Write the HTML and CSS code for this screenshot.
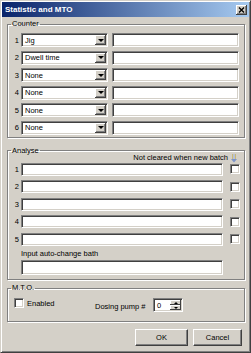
FILE: index.html
```html
<!DOCTYPE html>
<html>

<head>
    <title>Statistic and MTO</title>
    <link rel="stylesheet" href="styles.css">
</head>

<body>
    <div class="window">
        <div class="titlebar">
            <span class="title">Statistic and MTO</span>
            <span class="close">
                <svg width="7" height="6" viewBox="0 0 7 6">
                    <path d="M1 0.5 L6 5.5 M6 0.5 L1 5.5" stroke="#000" stroke-width="1.4" fill="none" />
                </svg>
            </span>
        </div>

        <div class="client">
            <!-- カウンター -->
            <fieldset class="group counter">
                <legend>Counter</legend>
                <div class="row"><span class="num">1</span><div class="combo"><span class="value">Jig</span><span class="drop"><i></i></span></div><div class="field wide"></div></div>
                <div class="row"><span class="num">2</span><div class="combo"><span class="value">Dwell time</span><span class="drop"><i></i></span></div><div class="field wide"></div></div>
                <div class="row"><span class="num">3</span><div class="combo"><span class="value">None</span><span class="drop"><i></i></span></div><div class="field wide"></div></div>
                <div class="row"><span class="num">4</span><div class="combo"><span class="value">None</span><span class="drop"><i></i></span></div><div class="field wide"></div></div>
                <div class="row"><span class="num">5</span><div class="combo"><span class="value">None</span><span class="drop"><i></i></span></div><div class="field wide"></div></div>
                <div class="row"><span class="num">6</span><div class="combo"><span class="value">None</span><span class="drop"><i></i></span></div><div class="field wide"></div></div>
            </fieldset>

            <!-- 分析 -->
            <fieldset class="group analyse">
                <legend>Analyse</legend>
                <div class="note">
                    <span>Not cleared when new batch</span>
                    <svg class="pin" width="6" height="9" viewBox="0 0 6 9">
                        <path d="M1.5 0 V5 M4.5 0 V5" stroke="#c8b878" stroke-width="1" />
                        <path d="M0 5 H6 L3 8.5 Z" fill="#7d94c8" />
                        <path d="M3 0 V5" stroke="#9fb3dd" stroke-width="1" />
                    </svg>
                </div>
                <div class="arow"><span class="num">1</span><div class="field long"></div><span class="check"></span></div>
                <div class="arow"><span class="num">2</span><div class="field long"></div><span class="check"></span></div>
                <div class="arow"><span class="num">3</span><div class="field long"></div><span class="check"></span></div>
                <div class="arow"><span class="num">4</span><div class="field long"></div><span class="check"></span></div>
                <div class="arow"><span class="num">5</span><div class="field long"></div><span class="check"></span></div>
                <div class="bath-label">Input auto-change bath</div>
                <div class="field bath"></div>
            </fieldset>

            <!-- MTO -->
            <fieldset class="group mto">
                <legend>M.T.O.</legend>
                <div class="mto-row">
                    <label class="enabled"><span class="check"></span><span>Enabled</span></label>
                    <div class="dosing">
                        <span class="dosing-label">Dosing pump #</span>
                        <div class="spin">
                            <span class="spin-value">0</span>
                            <span class="spin-buttons">
                                <span class="spin-btn"><i class="up"></i></span>
                                <span class="spin-btn"><i class="down"></i></span>
                            </span>
                        </div>
                    </div>
                </div>
            </fieldset>

            <div class="buttons">
                <button class="btn ok">OK</button>
                <button class="btn cancel">Cancel</button>
            </div>
        </div>
    </div>
</body>

</html>
```

FILE: styles.css
```css
* {
    box-sizing: border-box;
}

body {
    margin: 0;
    font-family: 'Liberation Sans', Arial, sans-serif;
    font-size: 7.5px;
    color: #000000;
    background: #d4d0c8;
}

.window {
    width: 251px;
    height: 353px;
    background: #d4d0c8;
    border: 1px solid;
    border-color: #d4d0c8 #404040 #404040 #d4d0c8;
    box-shadow: inset 1px 1px #ffffff, inset -1px -1px #808080;
    padding: 1px;
}

.titlebar {
    height: 15px;
    display: flex;
    align-items: center;
    justify-content: space-between;
    padding: 0 2px 0 3px;
    background: linear-gradient(to right, #0a246a, #a6caf0);
}

.title {
    color: #ffffff;
    font-weight: bold;
    font-size: 8px;
}

.close {
    width: 11px;
    height: 10px;
    display: flex;
    align-items: center;
    justify-content: center;
    background: #d4d0c8;
    box-shadow: inset -1px -1px #404040, inset 1px 1px #ffffff, inset -2px -2px #808080;
}

.client {
    padding: 3px 4px 0 5px;
}

.group {
    margin: 0;
    min-width: 0;
    border: 1px solid #808080;
    box-shadow: 1px 1px 0 #ffffff, inset 1px 1px 0 #ffffff;
}

legend {
    line-height: 8px;
    padding: 0 1px;
    margin-left: -1px;
}

.counter {
    padding: 5px 5px 2px 4px;
}

.row {
    display: flex;
    align-items: center;
    height: 14px;
    margin-bottom: 3.6px;
}

.row:last-child {
    margin-bottom: 0;
}

.num {
    width: 7px;
    margin-right: 2px;
    text-align: right;
}

.combo,
.field,
.check,
.spin {
    background: #ffffff;
    border: 1px solid;
    border-color: #808080 #ffffff #ffffff #808080;
    box-shadow: inset 1px 1px #404040, inset -1px -1px #d4d0c8;
}

.combo {
    width: 87px;
    height: 14px;
    display: flex;
    align-items: center;
    padding: 1px;
}

.combo .value {
    flex: 1;
    padding-left: 2px;
}

.drop {
    width: 11px;
    height: 10px;
    display: flex;
    align-items: center;
    justify-content: center;
    background: #d4d0c8;
    box-shadow: inset -1px -1px #404040, inset 1px 1px #ffffff, inset -2px -2px #808080;
}

.drop i {
    width: 0;
    height: 0;
    border-left: 3px solid transparent;
    border-right: 3px solid transparent;
    border-top: 3px solid #000000;
}

.field.wide {
    width: 127px;
    height: 14px;
    margin-left: 4px;
}

.analyse {
    margin-top: 9px;
    padding: 0 4px 4px 4px;
}

.note {
    display: flex;
    justify-content: flex-end;
    align-items: center;
    line-height: 8px;
    margin-top: -1px;
    padding-right: 3px;
}

.pin {
    margin-left: 3px;
}

.arow {
    display: flex;
    align-items: center;
    height: 13px;
    margin-bottom: 4.5px;
}

.field.long {
    width: 202px;
    height: 13px;
}

.check {
    width: 10px;
    height: 10px;
    flex-shrink: 0;
}

.arow .check {
    margin-left: 7px;
}

.bath-label {
    line-height: 8px;
    margin-top: 2.5px;
    padding-left: 9px;
}

.field.bath {
    width: 202px;
    height: 15px;
    margin: 2px 0 0 9px;
}

.mto {
    margin-top: 4px;
    padding: 6px 4px 9px 6px;
}

.mto legend {
    margin-left: -3px;
}

.mto-row {
    display: flex;
    align-items: flex-start;
}

.enabled {
    width: 81px;
    height: 10px;
    display: flex;
    align-items: center;
}

.enabled .check {
    margin-right: 3px;
}

.dosing {
    display: flex;
    align-items: center;
    height: 14px;
}

.dosing-label {
    width: 58px;
    padding-top: 2px;
}

.spin {
    width: 30px;
    height: 14px;
    display: flex;
    align-items: center;
    padding: 1px;
}

.spin-value {
    flex: 1;
    padding-left: 2px;
}

.spin-buttons {
    width: 11px;
    height: 10px;
    display: flex;
    flex-direction: column;
}

.spin-btn {
    flex: 1;
    display: flex;
    align-items: center;
    justify-content: center;
    background: #d4d0c8;
    box-shadow: inset -1px -1px #404040, inset 1px 1px #ffffff;
}

.spin-btn i {
    width: 0;
    height: 0;
    border-left: 2px solid transparent;
    border-right: 2px solid transparent;
}

.spin-btn .up {
    border-bottom: 2px solid #000000;
}

.spin-btn .down {
    border-top: 2px solid #000000;
}

.buttons {
    display: flex;
    justify-content: flex-end;
    gap: 5px;
    margin-top: 7px;
    padding-right: 3px;
}

.btn {
    height: 17px;
    padding: 0;
    font-family: inherit;
    font-size: 7.5px;
    color: #000000;
    background: #d4d0c8;
    border: 1px solid;
    border-color: #ffffff #404040 #404040 #ffffff;
    box-shadow: inset -1px -1px #808080;
}

.ok {
    width: 53px;
}

.cancel {
    width: 49px;
}
```
